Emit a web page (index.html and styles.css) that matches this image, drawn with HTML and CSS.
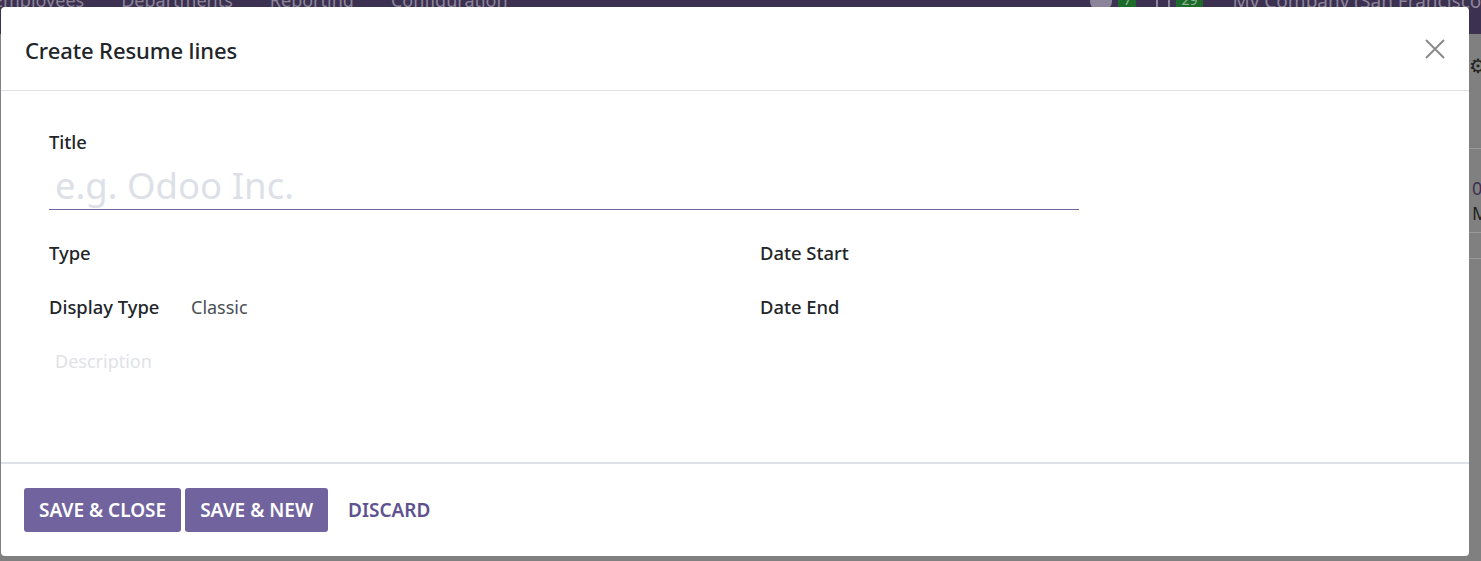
FILE: index.html
```html
<!DOCTYPE html>
<html>
<head>
<meta charset="utf-8">
<title>Create Resume lines</title>
<link rel="stylesheet" href="styles.css">
</head>
<body>
<div class="backdrop">
  <div class="navbar">
    <div class="nav-menu">
      <span>Employees</span>
      <span>Departments</span>
      <span>Reporting</span>
      <span>Configuration</span>
    </div>
    <div class="nav-right">
      <span class="toggle"></span><span class="badge">7</span>
      <span class="icon-box"></span><span class="badge">29</span>
      <span class="company">My Company (San Francisco)</span>
    </div>
  </div>
  <div class="under">
    <div class="gear">⚙</div>
    <div class="line l1"></div>
    <div class="txt t1">0</div>
    <div class="txt t2">M</div>
    <div class="line l2"></div>
    <div class="line l3"></div>
  </div>
</div>

<div class="modal">
  <header class="modal-header">
    <h4 class="modal-title">Create Resume lines</h4>
    <button class="close" aria-label="Close">
      <svg width="22" height="22" viewBox="0 0 22 22"><path d="M2 2 L20 20 M20 2 L2 20" stroke="#8a8a8a" stroke-width="2" fill="none"/></svg>
    </button>
  </header>
  <main class="modal-body">
    <div class="title-field">
      <label class="label">Title</label>
      <div class="title-input">e.g. Odoo Inc.</div>
    </div>
    <div class="groups">
      <div class="group">
        <div class="row"><span class="label col-label">Type</span><span class="value"></span></div>
        <div class="row"><span class="label col-label">Display Type</span><span class="value">Classic</span></div>
      </div>
      <div class="group">
        <div class="row"><span class="label">Date Start</span></div>
        <div class="row"><span class="label">Date End</span></div>
      </div>
    </div>
    <div class="description">Description</div>
  </main>
  <footer class="modal-footer">
    <button class="btn btn-primary">SAVE &amp; CLOSE</button>
    <button class="btn btn-primary">SAVE &amp; NEW</button>
    <button class="btn btn-link">DISCARD</button>
  </footer>
</div>
</body>
</html>
```
FILE: styles.css
```css
* { box-sizing: border-box; }
html, body {
  margin: 0;
  padding: 0;
  width: 1481px;
  height: 561px;
  overflow: hidden;
  font-family: "Noto Sans", "Open Sans", sans-serif;
}
body { background: #808080; position: relative; }

.backdrop { position: absolute; inset: 0; }
.navbar {
  height: 34px;
  background: #3c3150;
  display: flex;
  justify-content: space-between;
  color: #8c8599;
  font-size: 18px;
  overflow: hidden;
}
.nav-menu {
  display: flex;
  gap: 37px;
  margin-left: -7px;
  margin-top: -12px;
  height: 26px;
}
.nav-right {
  display: flex;
  align-items: center;
  gap: 6px;
  margin-top: -12px;
  height: 26px;
  margin-right: -6px;
}
.toggle { width: 22px; height: 22px; border-radius: 50%; background: #8c8599; }
.badge { background: #1d6b2a; color: #8fb596; font-size: 14px; padding: 0 5px; height: 22px; margin-right: 14px; }
.icon-box { width: 14px; height: 18px; border: 2px solid #8c8599; }
.company { margin-left: 10px; font-size: 19px; }

.under { position: absolute; left: 1469px; top: 34px; right: 0; bottom: 0; }
.gear { position: absolute; left: 0; top: 22px; color: #222; font-size: 20px; line-height: 20px; }
.line { position: absolute; left: 0; right: 0; height: 1px; background: #9a9a9a; }
.l1 { top: 114px; }
.l2 { top: 198px; }
.l3 { top: 224px; }
.txt { position: absolute; left: 3px; font-size: 18px; line-height: 20px; }
.t1 { top: 144px; color: #3c3150; }
.t2 { top: 169px; color: #222; }

.modal {
  position: absolute;
  left: 1px;
  top: 7px;
  width: 1468px;
  height: 549px;
  background: #fff;
  border-radius: 4px;
  display: flex;
  flex-direction: column;
  color: #212529;
}
.modal-header {
  height: 84px;
  border-bottom: 1px solid #dee2e6;
  display: flex;
  align-items: center;
  justify-content: space-between;
  padding: 0 22px 0 24px;
}
.modal-title {
  margin: 0;
  font-size: 22px;
  font-weight: 500;
  letter-spacing: -0.1px;
  margin-top: 2px;
}
.close {
  border: 0;
  background: transparent;
  padding: 0;
  width: 24px;
  height: 24px;
  display: flex;
  align-items: center;
  justify-content: center;
}

.modal-body {
  flex: 1;
  padding: 39px 48px 0 48px;
}
.label {
  font-size: 18.4px;
  font-weight: 500;
  color: #212529;
}
.title-field { display: flex; flex-direction: column; width: 1030px; }
.title-field .label { line-height: 24px; }
.title-input {
  font-size: 36.5px;
  line-height: 44px;
  color: #dde1e7;
  padding: 9px 0 0 6px;
  border-bottom: 1px solid #7164a0;
  height: 56px;
}
.groups {
  display: grid;
  grid-template-columns: 711px 1fr;
  margin-top: 30px;
}
.group { display: flex; flex-direction: column; gap: 30px; }
.row { display: flex; align-items: center; height: 24px; }
.col-label { width: 142px; }
.value { font-size: 18px; color: #4a4f55; margin-top: 2px; }
.description {
  margin-top: 31px;
  padding-left: 6px;
  font-size: 18px;
  color: #dfe2e6;
  line-height: 24px;
}

.modal-footer {
  height: 94px;
  border-top: 2px solid #dee2e6;
  display: flex;
  align-items: center;
  gap: 4px;
  padding: 0 0 0 23px;
}
.btn {
  font-family: inherit;
  font-size: 19px;
  font-weight: 600;
  height: 44px;
  border-radius: 3px;
  border: 0;
  padding: 0 15px;
  letter-spacing: 0;
}
.btn-primary { background: #71639e; color: #fff; }
.btn-link { background: transparent; color: #5f5290; padding: 0 16px; }
```
